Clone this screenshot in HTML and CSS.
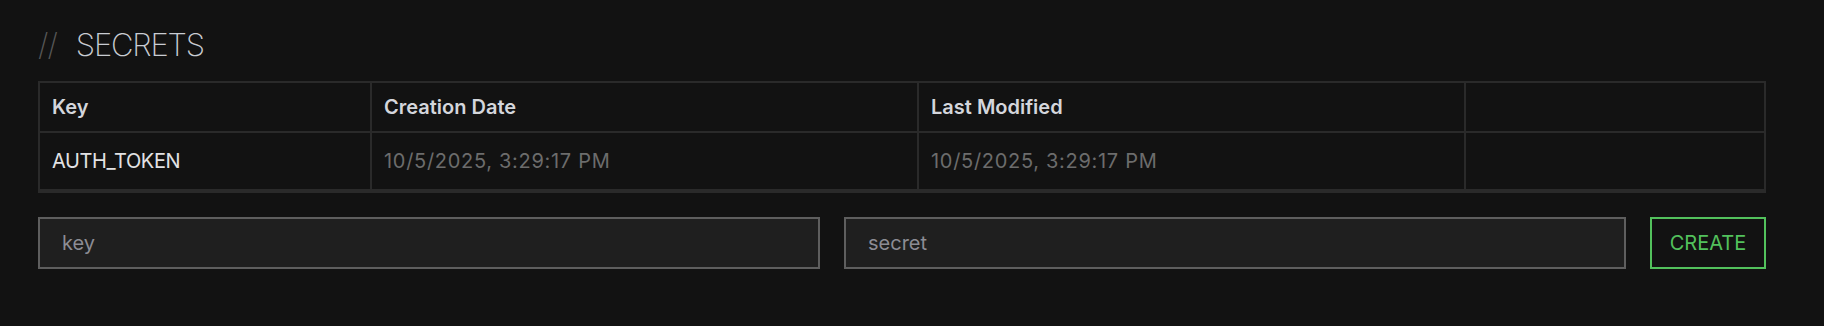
FILE: index.html
```html
<!DOCTYPE html>
<html lang="en">
<head>
<meta charset="utf-8">
<title>Secrets</title>
<link rel="stylesheet" href="styles.css">
</head>
<body>
<main class="page">
  <h1 class="title"><span class="title-slash">//</span><span class="title-text">SECRETS</span></h1>
  <div class="table-wrap">
    <table class="secrets">
      <colgroup>
        <col class="col-key">
        <col class="col-date">
        <col class="col-date">
        <col class="col-actions">
      </colgroup>
      <thead>
        <tr>
          <th>Key</th>
          <th>Creation Date</th>
          <th>Last Modified</th>
          <th></th>
        </tr>
      </thead>
      <tbody>
        <tr>
          <td class="cell-key">AUTH_TOKEN</td>
          <td class="cell-date">10/5/2025, 3:29:17 PM</td>
          <td class="cell-date">10/5/2025, 3:29:17 PM</td>
          <td></td>
        </tr>
      </tbody>
    </table>
  </div>
  <form class="create-form">
    <input class="field" type="text" placeholder="key">
    <input class="field" type="text" placeholder="secret">
    <button class="create-btn" type="button">CREATE</button>
  </form>
</main>
</body>
</html>
```

FILE: styles.css
```css
html, body {
  margin: 0;
  padding: 0;
  background: #121212;
}

body {
  font-family: "Inter", "Roboto", "DejaVu Sans", sans-serif;
  color: #d4d6dc;
}

.page {
  width: 1728px;
  padding: 26px 0 0 38px;
}

.title {
  margin: 0 0 17px 0;
  font-size: 31px;
  line-height: 38px;
  font-weight: 200;
  color: #c9ccd2;
}

.title-slash {
  color: #585858;
  margin-right: 19px;
  letter-spacing: -1px;
}

.title-text {
  letter-spacing: -1.2px;
}

.table-wrap {
  border: 2px solid #2a2a2a;
}

.secrets {
  width: 100%;
  table-layout: fixed;
  border-collapse: separate;
  border-spacing: 0;
}

.col-key { width: 332px; }
.col-date { width: 547px; }
.col-actions { width: auto; }

.secrets th,
.secrets td {
  text-align: left;
  padding: 0 12px;
  border-right: 2px solid #2a2a2a;
  border-bottom: 2px solid #2a2a2a;
  font-size: 20px;
  white-space: nowrap;
}

.secrets th:last-child,
.secrets td:last-child {
  border-right: none;
}

.secrets th {
  height: 48px;
  font-weight: 600;
  color: #d4d6dc;
}

.secrets td {
  height: 56px;
  font-weight: 400;
}

.cell-key {
  color: #e2e2e4;
  letter-spacing: -0.4px;
}

.cell-date {
  color: #6c6c6c;
  letter-spacing: 0.7px;
}

.create-form {
  display: flex;
  gap: 24px;
  margin-top: 24px;
}

.field {
  flex: 1;
  min-width: 0;
  box-sizing: border-box;
  height: 52px;
  margin: 0;
  padding: 0 22px;
  background: #1f1f1f;
  border: 2px solid #5e5e5e;
  border-radius: 0;
  font-family: "Inter", "Roboto", "DejaVu Sans", sans-serif;
  font-size: 20px;
  color: #d4d6dc;
  outline: none;
}

.field::placeholder {
  color: #8c8c94;
}

.create-btn {
  box-sizing: border-box;
  height: 52px;
  width: 116px;
  margin: 0;
  padding: 0;
  background: transparent;
  border: 2px solid #52c15c;
  border-radius: 0;
  font-family: "Inter", "Roboto", "DejaVu Sans", sans-serif;
  font-size: 20px;
  font-weight: 400;
  color: #52c15c;
  cursor: pointer;
}
```
